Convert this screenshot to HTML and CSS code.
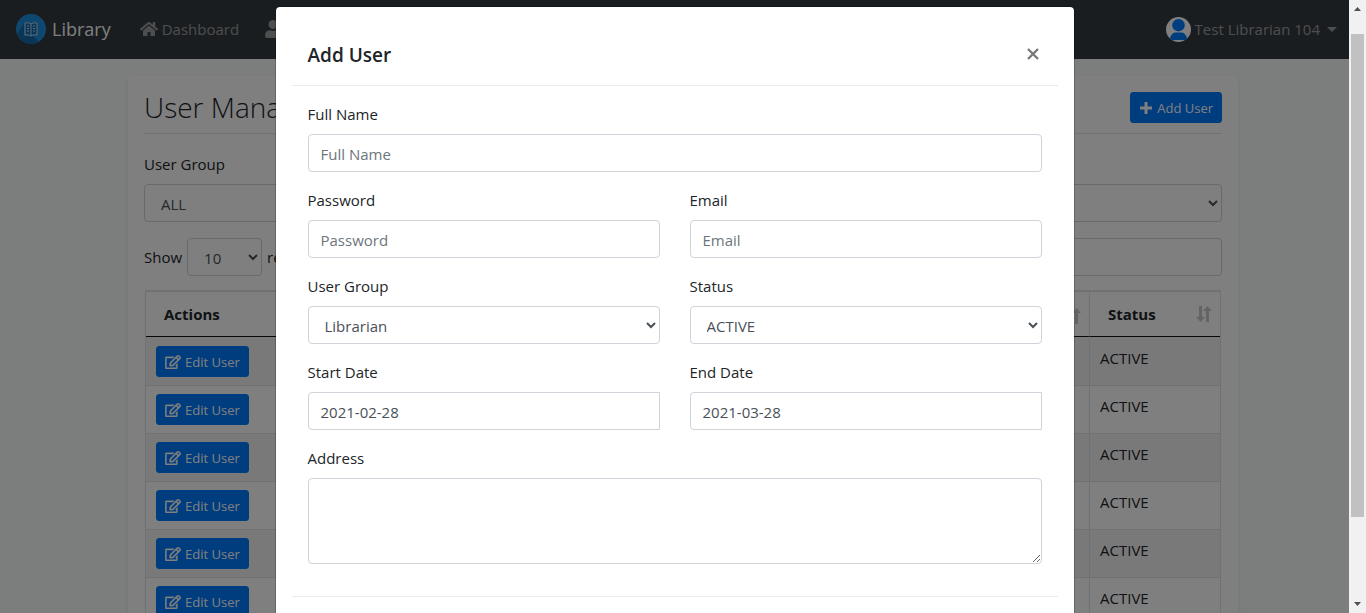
FILE: index.html
```html
<!DOCTYPE html>
<html lang="en">
<head>
<meta charset="utf-8">
<title>Library - User Management</title>
<link rel="stylesheet" href="styles.css">
</head>
<body>
<svg class="sprite" aria-hidden="true">
  <symbol id="edit" viewBox="0 0 576 512"><path stroke="currentColor" stroke-width="14" d="M402.300 344.900l32-32c5-5 13.700-1.500 13.700 5.700V464c0 26.500-21.500 48-48 48H48c-26.500 0-48-21.500-48-48V112c0-26.500 21.500-48 48-48h273.500c7.100 0 10.700 8.600 5.700 13.700l-32 32c-1.500 1.500-3.500 2.300-5.700 2.300H48v352h352V350.500c0-2.100.8-4.100 2.300-5.600zm156.600-201.800L296.300 405.700l-90.400 10c-26.200 2.900-48.500-19.200-45.600-45.600l10-90.400L432.900 17.100c22.900-22.900 59.900-22.900 82.700 0l43.200 43.200c22.900 22.900 22.900 60 .1 82.800zM460.100 174L402 115.900 216.200 301.800l-7.300 65.300 65.300-7.300L460.100 174zm64.800-79.700l-43.200-43.200c-4.100-4.100-10.800-4.100-14.800 0L436 82l58.100 58.100 30.900-30.900c4-4.200 4-10.800-.1-14.900z"/></symbol>
  <symbol id="sort" viewBox="0 0 16 18"><path d="M3 1h3v11h3l-4.500 5L0 12h3zM10 17h3V6h3l-4.500-5L7 6h3z"/></symbol>
</svg>
<div class="viewport">
  <div class="page">
    <nav class="navbar">
      <a class="brand" href="#">
        <svg class="logo" viewBox="0 0 30 30" aria-hidden="true">
          <circle cx="15" cy="15" r="15" fill="#1d8ee0"/>
          <path d="M8 9v13l7 8a15 15 0 0 1-14-10z" fill="#146aa9"/>
          <path d="M8 22l7 8q5 0 8-2l-7-7z" fill="#146aa9"/>
          <path d="M15 10q-3-2-6-1v12q3-1 6 1 3-2 6-1V9q-3-1-6 1zV22" fill="#176cac" stroke="#b6d9f3"/>
          <path d="M11 12h2M11 14.500h2M11 17h2M17 12h2M17 14.500h2M17 17h2" stroke="#b6d9f3"/>
        </svg>
        <span>Library</span>
      </a>
      <a class="nav-link" href="#">
        <svg class="home" viewBox="0 0 576 512" aria-hidden="true"><path d="M280 148L96 300v164a16 16 0 0 0 16 16h112a16 16 0 0 0 16-16v-95a16 16 0 0 1 16-16h64a16 16 0 0 1 16 16v95a16 16 0 0 0 16 16h112a16 16 0 0 0 16-16V300L296 148a12 12 0 0 0-16 0zM572 251l-84-69V44a12 12 0 0 0-12-12h-56a12 12 0 0 0-12 12v72l-90-74a48 48 0 0 0-61 0L4 251a12 12 0 0 0-1 17l25 31a12 12 0 0 0 17 2l235-194a12 12 0 0 1 16 0l235 194a12 12 0 0 0 17-2l25-31a12 12 0 0 0-1-17z"/></svg>
        <span>Dashboard</span>
      </a>
      <a class="nav-link" href="#" aria-label="Users">
        <svg class="person" viewBox="0 0 448 512" aria-hidden="true"><path d="M224 256a128 128 0 1 0 0-256 128 128 0 0 0 0 256zm90 32h-17a174 174 0 0 1-146 0h-17A134 134 0 0 0 0 422v42a48 48 0 0 0 48 48h352a48 48 0 0 0 48-48v-42a134 134 0 0 0-134-134z"/></svg>
      </a>
      <a class="nav-link account" href="#">
        <svg class="avatar" viewBox="0 0 26 26" aria-hidden="true"><circle cx="13" cy="13" r="13" fill="#fff"/><circle cx="13" cy="8.500" r="6.500" fill="#007bff"/><path d="M4 22q2-6 6-6h6q4 0 6 6l-2 2H6z" fill="#007bff"/></svg>
        <span>Test Librarian 104</span>
        <span class="caret"></span>
      </a>
    </nav>
    <main class="card">
      <header class="card-head">
        <h1>User Management</h1>
        <button class="btn" type="button"><svg class="plus" viewBox="0 0 12 12" aria-hidden="true"><path d="M6 0v12M0 6h12" stroke="currentColor" stroke-width="3"/></svg><span>Add User</span></button>
      </header>
      <div class="columns filters">
        <div class="field">
          <label for="filter-group">User Group</label>
          <select class="control" id="filter-group"><option>ALL</option></select>
        </div>
        <div class="field">
          <label for="filter-status">Status</label>
          <select class="control" id="filter-status"><option>ALL</option></select>
        </div>
      </div>
      <div class="columns tools">
        <label class="length">Show <select class="control short"><option>10</option></select> records</label>
        <input class="control" type="search" aria-label="Search">
      </div>
      <table class="users">
        <thead><tr><th class="actions">Actions</th><th><svg class="sort"><use href="#sort"/></svg></th><th class="status">Status<svg class="sort"><use href="#sort"/></svg></th></tr></thead>
        <tbody>
          <tr><td><button class="btn" type="button"><svg class="edit"><use href="#edit"/></svg><span>Edit User</span></button></td><td></td><td>ACTIVE</td></tr>
          <tr><td><button class="btn" type="button"><svg class="edit"><use href="#edit"/></svg><span>Edit User</span></button></td><td></td><td>ACTIVE</td></tr>
          <tr><td><button class="btn" type="button"><svg class="edit"><use href="#edit"/></svg><span>Edit User</span></button></td><td></td><td>ACTIVE</td></tr>
          <tr><td><button class="btn" type="button"><svg class="edit"><use href="#edit"/></svg><span>Edit User</span></button></td><td></td><td>ACTIVE</td></tr>
          <tr><td><button class="btn" type="button"><svg class="edit"><use href="#edit"/></svg><span>Edit User</span></button></td><td></td><td>ACTIVE</td></tr>
          <tr><td><button class="btn" type="button"><svg class="edit"><use href="#edit"/></svg><span>Edit User</span></button></td><td></td><td>ACTIVE</td></tr>
        </tbody>
      </table>
    </main>
    <div class="overlay">
      <form class="modal" role="dialog" aria-labelledby="modal-title">
        <header class="modal-head">
          <h2 id="modal-title">Add User</h2>
          <button class="close" type="button" aria-label="Close"><svg viewBox="0 0 12 12" aria-hidden="true"><path d="M1 1l10 10M11 1L1 11" stroke="currentColor" stroke-width="2.400"/></svg></button>
        </header>
        <div class="modal-body">
          <div class="field wide"><label for="name">Full Name</label><input class="control" id="name" type="text" placeholder="Full Name"></div>
          <div class="field"><label for="password">Password</label><input class="control" id="password" type="password" placeholder="Password"></div>
          <div class="field"><label for="email">Email</label><input class="control" id="email" type="email" placeholder="Email"></div>
          <div class="field"><label for="group">User Group</label><select class="control" id="group"><option>Librarian</option></select></div>
          <div class="field"><label for="status">Status</label><select class="control" id="status"><option>ACTIVE</option></select></div>
          <div class="field"><label for="start">Start Date</label><input class="control date" id="start" type="text" value="2021-02-28"></div>
          <div class="field"><label for="end">End Date</label><input class="control date" id="end" type="text" value="2021-03-28"></div>
          <div class="field wide"><label for="address">Address</label><textarea class="control" id="address" rows="3"></textarea></div>
        </div>
        <footer class="modal-foot"></footer>
      </form>
    </div>
  </div>
  <div class="scrollbar" aria-hidden="true">
    <svg viewBox="0 0 17 17"><path d="M5 11l3.500-4 3.500 4z"/></svg>
    <div class="track"><div class="thumb"></div></div>
    <svg viewBox="0 0 17 17"><path d="M5 6l3.500 4L12 6z"/></svg>
  </div>
</div>
</body>
</html>
```

FILE: styles.css
```css
* { box-sizing: border-box; }

body {
  margin: 0;
  color: #212529;
  font: 15px/24px "Open Sans", "Noto Sans", sans-serif;
}

h1, h2 { margin: 0; }
a { color: inherit; text-decoration: none; }
svg { flex: none; fill: currentColor; }
.sprite { display: none; }

.viewport { display: flex; height: 100vh; overflow: hidden; }

.page {
  position: relative;
  flex: 1;
  min-width: 0;
  overflow: hidden;
  background: #f7fcf9;
}

/* Navigation */
.navbar {
  display: flex;
  align-items: center;
  gap: 26px;
  padding: 7px 12px 8px 16px;
  min-height: 59px;
  background: #343a40;
}
.brand { display: flex; align-items: center; gap: 6px; color: #fff; font-size: 18px; margin-right: 3px; }
.nav-link { display: flex; align-items: center; gap: 4px; color: rgba(255, 255, 255, .5); }
.account { margin-left: auto; }
.logo { width: 30px; height: 30px; }
.home { width: 18px; height: 16px; }
.person { width: 16px; height: 18px; }
.avatar { width: 25px; height: 25px; }
.caret { margin-left: 3px; border: 5px solid transparent; border-top-color: currentColor; border-bottom: 0; }

/* Page card */
.card {
  max-width: 1110px;
  margin: 17px auto 0 128px;
  padding: 16px;
  border-radius: 4px;
  background: #fff;
  box-shadow: 0 2px 4px rgba(0, 0, 0, .08);
}
.card-head {
  display: flex;
  justify-content: space-between;
  align-items: flex-start;
  padding-bottom: 10px;
  border-bottom: 1px solid #e5e5e5;
}
h1 { font-size: 28px; font-weight: 300; line-height: 31px; }

.btn {
  display: inline-flex;
  align-items: center;
  gap: 4px;
  padding: 4px 8px;
  border: 1px solid #007bff;
  border-radius: 3px;
  background: #007bff;
  color: #fff;
  font: 13px/21px "Open Sans", "Noto Sans", sans-serif;
}
.btn span { padding-top: 1px; line-height: 20px; }
.plus { width: 14px; height: 12px; }
.edit { width: 16px; height: 14px; }

.columns { display: grid; grid-template-columns: 1fr 1fr; gap: 30px; }
.filters { margin-top: 18px; }
.tools { margin: 16px 0 14px; }
.field label { display: block; margin-bottom: 8px; }
.length { display: flex; align-items: center; gap: 5px; }

.control {
  display: block;
  width: 100%;
  height: 38px;
  padding: 7px 12px 5px;
  border: 1px solid #ced4da;
  border-radius: 4px;
  background: #fff;
  color: #495057;
  font: inherit;
}
.control::placeholder { color: #6c757d; opacity: 1; }
.short { width: 75px; }
.date { border-radius: 4px 0 0 4px; }
textarea.control { height: auto; resize: vertical; }

/* Users table */
.users {
  width: calc(100% - 2px);
  margin: 0 1px;
  table-layout: fixed;
  border-spacing: 0;
  border: 1px solid #dee2e6;
  border-width: 2px 1px 0;
}
.users th {
  padding: 10px 18px;
  border-bottom: 1px solid #111;
  border-right: 1px solid #dee2e6;
  text-align: left;
  font-weight: 700;
}
.users td {
  height: 48px;
  padding: 9px 10px 7px;
  border-right: 1px solid #dee2e6;
  border-bottom: 1px solid #dee2e6;
  vertical-align: top;
}
.users tbody tr:first-child td { height: 49px; }
.users tbody tr:not(:first-child) td { padding-top: 8px; }
.users tr > :last-child { border-right: 0; }
.users tbody tr:nth-child(odd) { background: #f2f2f2; }
.users .actions { width: 160px; }
.users .status { width: 130px; }
.sort { float: right; width: 16px; height: 18px; margin: 3px -10px 0 0; color: #c8c8c8; }

/* Dialog */
.overlay {
  position: absolute;
  inset: 0;
  overflow: hidden;
  padding-top: 6px;
  background: rgba(0, 0, 0, .5);
}
.modal {
  max-width: 800px;
  margin: 0 auto;
  padding: 16px;
  border: 1px solid rgba(0, 0, 0, .2);
  border-radius: 5px;
  background: #fff;
  background-clip: padding-box;
}
.modal-head {
  display: flex;
  justify-content: space-between;
  align-items: center;
  padding: 16px;
  border-bottom: 1px solid #e9ecef;
}
h2 { padding-top: 2px; font-size: 19px; font-weight: 600; line-height: 28px; }
.close { display: flex; padding: 3px; border: 0; background: none; color: #7a7a7a; }
.close svg { width: 12px; height: 12px; }
.modal-body { display: grid; grid-template-columns: 1fr 1fr; gap: 16px 30px; padding: 16px 16px 32px; }
.wide { grid-column: 1 / -1; }
.modal-foot { min-height: 70px; border-top: 1px solid #e9ecef; }

/* Window scrollbar */
.scrollbar { display: flex; flex-direction: column; width: 17px; background: #f1f1f1; color: #505050; }
.track { flex: 1; padding: 17px 2px 0; }
.thumb { height: 86%; background: #c1c1c1; }
```
